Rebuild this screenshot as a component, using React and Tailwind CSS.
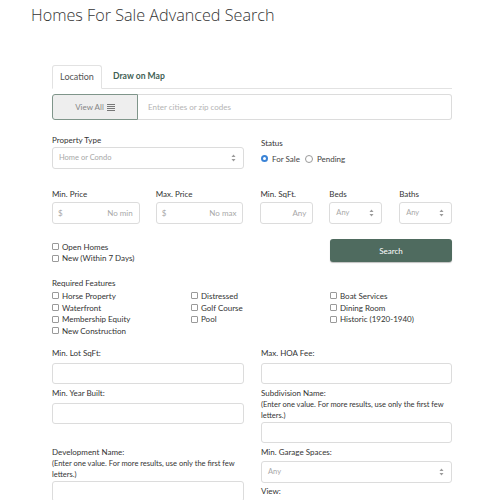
import React from "react";

const Updown = () => (
  <svg width="5" height="8" viewBox="0 0 5 8" className="shrink-0">
    <path d="M2.5 0.5 L4.5 3 L0.5 3 Z" fill="#9a9a9a" />
    <path d="M2.5 7.5 L4.5 5 L0.5 5 Z" fill="#9a9a9a" />
  </svg>
);

const Lines = () => (
  <svg width="8" height="7" viewBox="0 0 8 7" className="ml-[3px]">
    <rect x="0" y="0" width="8" height="1" fill="#777" />
    <rect x="0" y="2" width="8" height="1" fill="#777" />
    <rect x="0" y="4" width="8" height="1" fill="#777" />
    <rect x="0" y="6" width="8" height="1" fill="#777" />
  </svg>
);

const Box = () => (
  <span className="inline-block w-[7px] h-[7px] border border-[#9a9a9a] rounded-[1px] bg-white mr-[3px] shrink-0" />
);

const Check = ({ children }) => (
  <div className="flex items-center h-[11.6px] text-[8px] text-[#333]">
    <Box />
    <span>{children}</span>
  </div>
);

const Label = ({ children, className = "" }) => (
  <div className={"text-[8px] leading-[11px] text-[#333] " + className}>{children}</div>
);

const Note = () => (
  <span className="text-[7.5px]">
    (Enter one value. For more results, use only the first few letters.)
  </span>
);

const TextBox = ({ className = "" }) => (
  <div className={"h-[21px] border border-[#dcdcdc] rounded-[3px] bg-white " + className} />
);

const SelectBox = ({ text, className = "" }) => (
  <div
    className={
      "h-[22px] border border-[#dcdcdc] rounded-[3px] bg-white flex items-center justify-between pl-[6px] pr-[7px] text-[7.5px] text-[#a8a8a8] " +
      className
    }
  >
    <span>{text}</span>
    <Updown />
  </div>
);

const PriceBox = ({ prefix, text, className = "" }) => (
  <div
    className={
      "h-[22px] border border-[#dcdcdc] rounded-[3px] bg-white flex items-center justify-between pl-[5px] pr-[6px] text-[8px] text-[#a8a8a8] " +
      className
    }
  >
    <span>{prefix}</span>
    <span>{text}</span>
  </div>
);

export default function App() {
  return (
    <div className="w-[500px] h-[500px] overflow-hidden bg-white font-['Lato',sans-serif] text-[#333]">
      <h1 className="pt-[4px] pl-[31px] text-[16.2px] leading-[22px] font-light font-['Open_Sans',sans-serif] text-[#333]">
        Homes For Sale Advanced Search
      </h1>

      <div className="ml-[52px] w-[400px]">
        {/* tabs */}
        <div className="mt-[39px] flex items-end border-b border-[#e2e2e2] h-[24px]">
          <div className="h-[24px] w-[50px] border border-[#e2e2e2] border-b-white -mb-px rounded-t-[3px] bg-white flex items-center justify-center text-[9px] text-[#555]">
            Location
          </div>
          <div className="h-[24px] flex items-center pl-[11px] text-[8.6px] font-bold text-[#3f5f54]">
            Draw on Map
          </div>
        </div>

        {/* location search */}
        <div className="mt-[5px] flex h-[26px]">
          <div className="w-[86px] bg-[#eeeeee] border border-[#7f958a] rounded-l-[3px] flex items-center justify-center text-[8px] text-[#858585]">
            View All
            <Lines />
          </div>
          <div className="flex-1 border border-l-0 border-[#dcdcdc] rounded-r-[3px] flex items-center pl-[10px] text-[8px] text-[#b4b4b4]">
            Enter cities or zip codes
          </div>
        </div>

        {/* property type / status */}
        <div className="mt-[15px] flex gap-[17px]">
          <div className="w-[192px]">
            <Label className="mb-[1px]">Property Type</Label>
            <SelectBox text="Home or Condo" />
          </div>
          <div className="flex-1 pt-[3px]">
            <Label>Status</Label>
            <div className="mt-[4px] flex items-center text-[8px] text-[#444] h-[11px]">
              <span className="w-[7px] h-[7px] rounded-full bg-[#3a83d6] flex items-center justify-center mr-[4px]">
                <span className="w-[2.5px] h-[2.5px] rounded-full bg-white" />
              </span>
              <span>For Sale</span>
              <span className="w-[8px] h-[8px] rounded-full border border-[#9a9a9a] ml-[5px] mr-[4px]" />
              <span>Pending</span>
            </div>
          </div>
        </div>

        {/* prices / sizes */}
        <div className="mt-[20px] flex">
          <div className="w-[88px]">
            <Label className="mb-[2px]">Min. Price</Label>
            <PriceBox prefix="$" text="No min" />
          </div>
          <div className="w-[88px] ml-[16px]">
            <Label className="mb-[2px]">Max. Price</Label>
            <PriceBox prefix="$" text="No max" />
          </div>
          <div className="w-[53px] ml-[17px]">
            <Label className="mb-[2px]">Min. SqFt.</Label>
            <PriceBox prefix="" text="Any" />
          </div>
          <div className="w-[53px] ml-[16px]">
            <Label className="mb-[2px]">Beds</Label>
            <SelectBox text="Any" />
          </div>
          <div className="w-[53px] ml-[17px]">
            <Label className="mb-[2px]">Baths</Label>
            <SelectBox text="Any" />
          </div>
        </div>

        {/* quick filters + search */}
        <div className="mt-[15px] flex justify-between items-start">
          <div className="pt-[2px]">
            <Check>Open Homes</Check>
            <Check>New (Within 7 Days)</Check>
          </div>
          <button className="w-[122px] h-[23px] bg-[#4f6b5f] rounded-[3px] text-white text-[8px] shadow-[0_1px_1px_rgba(0,0,0,0.25)]">
            Search
          </button>
        </div>

        {/* required features */}
        <div className="mt-[14px]">
          <Label className="mb-[1px]">Required Features</Label>
          <div className="grid grid-cols-3 gap-x-[17px]">
            <div>
              <Check>Horse Property</Check>
              <Check>Waterfront</Check>
              <Check>Membership Equity</Check>
              <Check>New Construction</Check>
            </div>
            <div>
              <Check>Distressed</Check>
              <Check>Golf Course</Check>
              <Check>Pool</Check>
            </div>
            <div>
              <Check>Boat Services</Check>
              <Check>Dining Room</Check>
              <Check>Historic (1920-1940)</Check>
            </div>
          </div>
        </div>

        {/* detail fields */}
        <div className="mt-[11px] grid grid-cols-[192px_191px] gap-x-[17px] gap-y-[4px]">
          <div>
            <Label className="mb-[4px]">Min. Lot SqFt:</Label>
            <TextBox />
          </div>
          <div>
            <Label className="mb-[4px]">Max. HOA Fee:</Label>
            <TextBox />
          </div>
          <div>
            <Label className="mb-[4px]">Min. Year Built:</Label>
            <TextBox />
          </div>
          <div>
            <Label className="mb-[1px]">
              Subdivision Name:
              <br />
              <Note />
            </Label>
            <TextBox />
          </div>
          <div>
            <Label className="mb-[1px]">
              Development Name:
              <br />
              <Note />
            </Label>
            <TextBox />
          </div>
          <div>
            <Label className="mb-[3px]">Min. Garage Spaces:</Label>
            <SelectBox text="Any" />
            <Label className="mt-[3px]">View:</Label>
          </div>
        </div>
      </div>
    </div>
  );
}
